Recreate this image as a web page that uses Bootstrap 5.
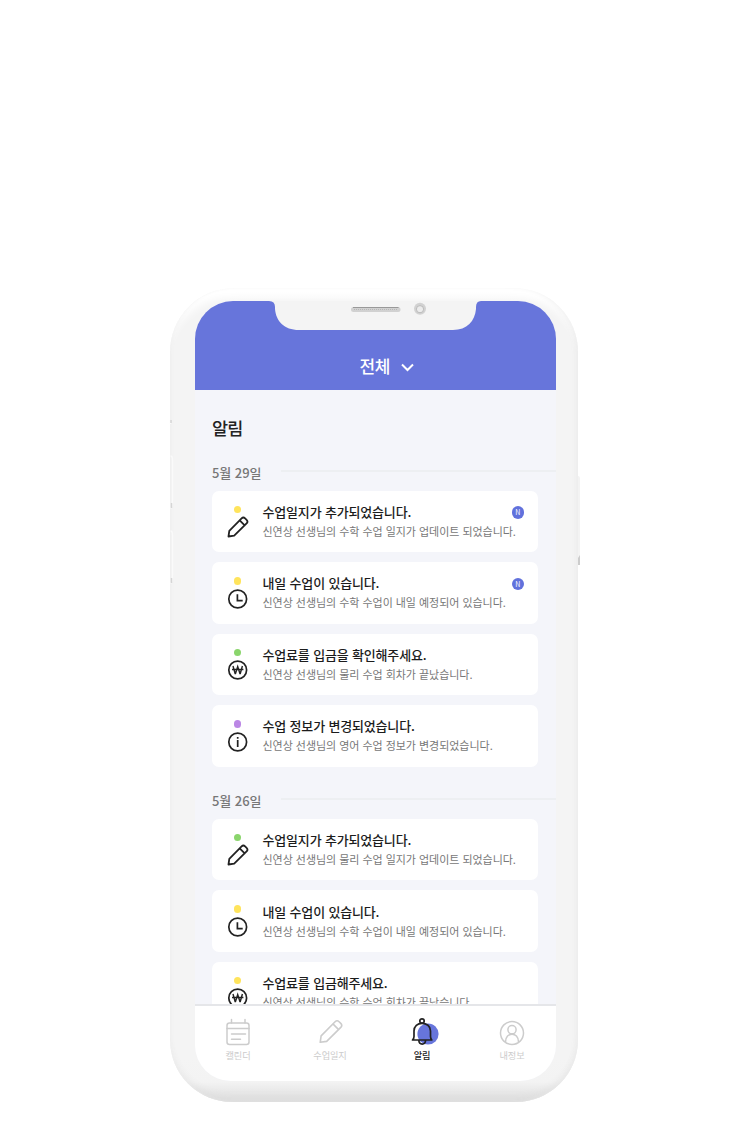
<!DOCTYPE html>
<html lang="ko">
<head>
<meta charset="utf-8">
<meta name="viewport" content="width=device-width, initial-scale=1">
<title>알림</title>
<link rel="stylesheet" href="https://cdn.jsdelivr.net/npm/bootstrap@5.3.0/dist/css/bootstrap.min.css">
<style>
body{background:#fff;font-family:"Noto Sans CJK KR","Noto Sans",sans-serif;color:#222;height:1126px;overflow:hidden}
.stage{padding:288px 0 0 170px}
.phone{width:408px;height:814px;padding:13px 22.5px 20px 25px;border-radius:64px 64px 62px 62px;
 background:linear-gradient(to bottom,#fff 0,#fafafa 5px,#f4f4f4 14px,#f4f4f4 770px,#f3f3f3 794px,#dcdcdc 814px);
 box-shadow:inset 3px 0 5px -3px #efefef,inset -4px 0 6px -3px #ebebeb,inset 0 16px 10px -7px #fff,inset 0 -7px 10px -5px #dcdcdc}
.side{width:3px;z-index:2}
.screen{width:360.5px;height:780px;border-radius:38px 38px 36px 36px;background:#f4f5fa}
.top-bar{height:89px;background:#6775db;color:#fff;padding:53px 0 0 164.5px;font-size:17px;line-height:24px;gap:11px;font-weight:500;letter-spacing:-.4px}
.notch{left:77.5px;top:-1px}
.feed{height:614px;padding:0 17.5px 0 17px}
.heading{font-size:17.5px;line-height:24px;padding-top:26px;font-weight:500;letter-spacing:-.8px;margin:0 0 23px}
.day{font-size:13px;line-height:20px;font-weight:500;color:#777;height:20px;margin-right:-17.5px;gap:19px;letter-spacing:-.05px}
.day i{height:2px;background:#edeff2;margin-top:-4px}
.day-notes{gap:10px;margin:7.5px 0 24.5px}
.note{height:61.5px;border-radius:7px;background:#fff;padding:11.9px 0 0 14px;gap:13.5px}
.mark-col{width:23px;padding-top:3.5px}
.dot{width:7.5px;height:7.5px;border-radius:50%;margin-bottom:2.7px}
.y{background:#ffe45c}.g{background:#8ad56c}.p{background:#bb87e5}
.note b{display:block;font-size:13px;line-height:20px;font-weight:500;letter-spacing:-.17px;white-space:nowrap;color:#1c1c1c}
.note span{display:block;font-size:11px;line-height:18px;color:#777;white-space:nowrap;letter-spacing:-.03px}
.note .copy{margin-top:-.5px}
.new{right:14px;top:15.5px;width:12.5px;height:12.5px;border-radius:50%;background:#6171dc;color:#fff;font-size:7px;line-height:12.5px}
.tabs{height:77px;background:#fff;border-top:2px solid #e5e6e9;color:#ccc;font-size:9.2px;line-height:14px;padding:11px 0 0 15px;gap:36px}
.tab{width:56px;letter-spacing:-.1px}
.tab svg{display:block;margin-bottom:3px}
svg{overflow:visible;flex:none}
</style>
<script src="https://cdn.jsdelivr.net/npm/bootstrap@5.3.0/dist/js/bootstrap.bundle.min.js"></script>
</head>
<body>
<svg width="0" height="0" class="position-absolute" fill="none" stroke="currentColor">
 <symbol id="pencil" viewBox="0 0 22 22"><path d="M1.500 20.500 2.300 14.800 14.600 2.400a2.500 2.500 0 0 1 3.500 0l1.500 1.500a2.500 2.500 0 0 1 0 3.500L7.200 19.700ZM12.700 4.300l5 5" stroke-linejoin="round" stroke-linecap="round"/></symbol>
 <symbol id="clock" viewBox="0 0 22 22"><circle cx="10.700" cy="11" r="8.900"/><path d="M10.400 6.300v6.300h5.300"/></symbol>
 <symbol id="won" viewBox="0 0 22 22"><circle cx="10.700" cy="11" r="8.900"/><path d="m6 7 2.100 7.500h.4l2.200-7 2.200 7h.4L15.400 7M5 10.500h11.400" stroke-width="1.400"/></symbol>
 <symbol id="info" viewBox="0 0 22 22"><circle cx="10.700" cy="11" r="8.900"/><path d="M10.700 9v7M10.700 6v1.700"/></symbol>
</svg>
<main class="stage">
<div class="phone position-relative">
 <svg class="side position-absolute start-0 top-0" width="3" height="300" fill="none"><path d="M.5 132v4M.5 168q2 0 2 4v40q0 8-2 8M.5 243q2 0 2 4v40q0 8-2 8" stroke="#fafafa" stroke-width="1.500"/><path d="M1 132v3M1.500 215v5M1.500 290v5" stroke="#d5d5d5" stroke-width="1.500"/></svg>
 <svg class="side position-absolute start-100 top-0" width="2" height="300"><path d="M0 188q2 0 2 3v86H0z" fill="#f3f3f3"/><path d="M0 270l2-3v10H0z" fill="#ccc"/></svg>
 <div class="screen position-relative overflow-hidden d-flex flex-column">
  <svg class="notch position-absolute" width="206" height="31" viewBox="0 0 206 31"><path d="M-4 0v1q6 0 6 6v2C3 21 11 30 26 30h154c14 0 22-9 23-21V7q0-6 5-6V0Z" fill="#f4f4f4"/><rect x="78" y="7" width="49.500" height="5" rx="2.500" fill="#d1d1d1"/><path d="M80 7.500h45.500" stroke="#999" stroke-width="1"/><path d="M81 9.500h44" stroke="#b7b7b7" stroke-dasharray="1 1"/><circle cx="147" cy="8.700" r="6" fill="#d2d2d2"/><circle cx="147" cy="9.200" r="3.600" fill="#ececec" stroke="#b5b5b5" stroke-width=".9"/></svg>
  <header class="top-bar d-flex"><div>전체</div><svg width="13" height="9" class="mt-2" viewBox="0 -1 13 9" fill="none"><path d="m1 1.500 5.500 5.500L12 1.500" stroke="#fff" stroke-width="2"/></svg></header>
  <section class="feed overflow-hidden">
   <h1 class="heading">알림</h1>
   <div class="day d-flex align-items-center"><span>5월 29일</span><i class="flex-grow-1"></i></div>
   <div class="day-notes d-flex flex-column">
    <article class="note d-flex position-relative"><div class="mark-col d-flex flex-column align-items-center"><div class="dot y"></div><svg width="22" height="22" fill="none" stroke="#222" stroke-width="1.800"><use href="#pencil"/></svg></div><div class="copy"><b>수업일지가 추가되었습니다.</b><span>신연상 선생님의 수학 수업 일지가 업데이트 되었습니다.</span></div><div class="new position-absolute text-center">N</div></article>
    <article class="note d-flex position-relative"><div class="mark-col d-flex flex-column align-items-center"><div class="dot y"></div><svg width="22" height="22" fill="none" stroke="#222" stroke-width="1.700"><use href="#clock"/></svg></div><div class="copy"><b>내일 수업이 있습니다.</b><span>신연상 선생님의 수학 수업이 내일 예정되어 있습니다.</span></div><div class="new position-absolute text-center">N</div></article>
    <article class="note d-flex"><div class="mark-col d-flex flex-column align-items-center"><div class="dot g"></div><svg width="22" height="22" fill="none" stroke="#222" stroke-width="1.700"><use href="#won"/></svg></div><div class="copy"><b>수업료를 입금을 확인해주세요.</b><span>신연상 선생님의 물리 수업 회차가 끝났습니다.</span></div></article>
    <article class="note d-flex"><div class="mark-col d-flex flex-column align-items-center"><div class="dot p"></div><svg width="22" height="22" fill="none" stroke="#222" stroke-width="1.700"><use href="#info"/></svg></div><div class="copy"><b>수업 정보가 변경되었습니다.</b><span>신연상 선생님의 영어 수업 정보가 변경되었습니다.</span></div></article>
   </div>
   <div class="day d-flex align-items-center"><span>5월 26일</span><i class="flex-grow-1"></i></div>
   <div class="day-notes d-flex flex-column">
    <article class="note d-flex"><div class="mark-col d-flex flex-column align-items-center"><div class="dot g"></div><svg width="22" height="22" fill="none" stroke="#222" stroke-width="1.800"><use href="#pencil"/></svg></div><div><b>수업일지가 추가되었습니다.</b><span>신연상 선생님의 물리 수업 일지가 업데이트 되었습니다.</span></div></article>
    <article class="note d-flex"><div class="mark-col d-flex flex-column align-items-center"><div class="dot y"></div><svg width="22" height="22" fill="none" stroke="#222" stroke-width="1.700"><use href="#clock"/></svg></div><div><b>내일 수업이 있습니다.</b><span>신연상 선생님의 수학 수업이 내일 예정되어 있습니다.</span></div></article>
    <article class="note d-flex"><div class="mark-col d-flex flex-column align-items-center"><div class="dot y"></div><svg width="22" height="22" fill="none" stroke="#222" stroke-width="1.700"><use href="#won"/></svg></div><div><b>수업료를 입금해주세요.</b><span>신연상 선생님의 수학 수업 회차가 끝났습니다.</span></div></article>
   </div>
  </section>
  <nav class="tabs d-flex">
   <div class="tab d-flex flex-column align-items-center"><svg width="26" height="28" viewBox="0 0 26 28" fill="none" stroke="currentColor" stroke-width="1.500" stroke-linecap="round"><rect x="2" y="6" width="22" height="21.500" rx="2.500"/><path d="M2 11.500h22M6.500 2.500V6M20 2.500V6M6.500 17h14M6.500 22.300h9"/></svg>캘린더</div>
   <div class="tab d-flex flex-column align-items-center"><svg width="26" height="28" viewBox="0 0 26 28" fill="none" stroke="currentColor" stroke-width="1.400"><use href="#pencil" x="1.500" y="2" width="25" height="25"/></svg>수업일지</div>
   <div class="tab d-flex flex-column align-items-center" style="font-weight:500;color:#222"><svg width="26" height="28" viewBox="0 0 26 28" fill="none" stroke="#222" stroke-width="1.700"><circle cx="19" cy="17" r="10.600" fill="#6775db" stroke="none"/><circle cx="13" cy="4" r="2.200"/><path d="M5 19.500V14C5 9 8.500 6.300 13 6.300S21.500 9 21.500 14v5.500q0 2 1.300 3.500H3.500Q5 21.500 5 19.500ZM9.800 23.300c.3 5 6.500 5 6.800 0" stroke-linejoin="round"/></svg>알림</div>
   <div class="tab d-flex flex-column align-items-center" style="margin-left:-2px"><svg width="26" height="28" viewBox="0 0 26 28" fill="none" stroke="currentColor" stroke-width="1.500"><circle cx="13" cy="16" r="11.500"/><circle cx="13" cy="12.700" r="4.100"/><path d="M6.500 25c0-10.500 13-10.500 13 0"/></svg>내정보</div>
  </nav>
 </div>
</div>
</main>
</body>
</html>
